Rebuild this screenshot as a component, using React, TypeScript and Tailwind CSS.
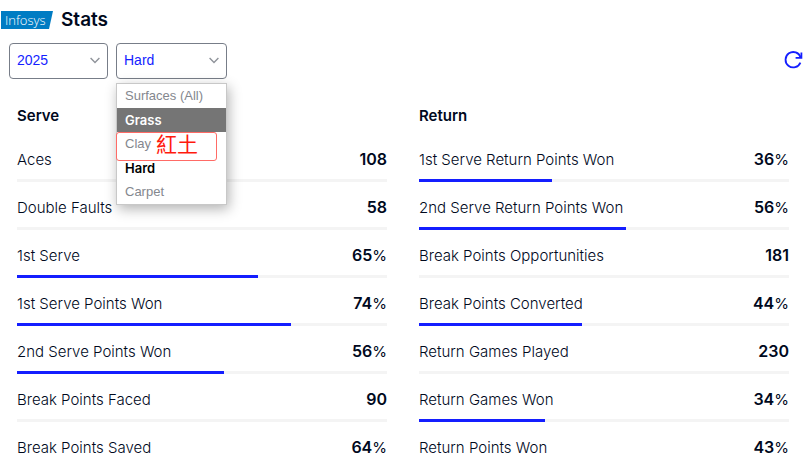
import React from "react";

type Stat = { label: string; value: number; percent?: boolean };

const serve: Stat[] = [
  { label: "Aces", value: 108 },
  { label: "Double Faults", value: 58 },
  { label: "1st Serve", value: 65, percent: true },
  { label: "1st Serve Points Won", value: 74, percent: true },
  { label: "2nd Serve Points Won", value: 56, percent: true },
  { label: "Break Points Faced", value: 90 },
  { label: "Break Points Saved", value: 64, percent: true },
];

const returns: Stat[] = [
  { label: "1st Serve Return Points Won", value: 36, percent: true },
  { label: "2nd Serve Return Points Won", value: 56, percent: true },
  { label: "Break Points Opportunities", value: 181 },
  { label: "Break Points Converted", value: 44, percent: true },
  { label: "Return Games Played", value: 230 },
  { label: "Return Games Won", value: 34, percent: true },
  { label: "Return Points Won", value: 43, percent: true },
];

const surfaces = ["Surfaces (All)", "Grass", "Clay", "Hard", "Carpet"];

function InfosysLogo() {
  return (
    <svg width="53" height="24" viewBox="0 0 53 24" role="img" aria-label="Infosys">
      <path d="M1 3H53L49 21H1Z" fill="#007cc3" />
      <text x="5" y="17" fontSize="13" fill="#ffffff" className="font-['Open_Sans',sans-serif] font-light">
        Infosys
      </text>
    </svg>
  );
}

function Chevron() {
  return (
    <svg
      className="pointer-events-none absolute top-3 right-2"
      width="10"
      height="10"
      viewBox="0 0 10 10"
      fill="none"
      stroke="#8f939a"
      strokeWidth="1.4"
      aria-hidden="true"
    >
      <path d="M0.6 3L5 7.4L9.4 3" />
    </svg>
  );
}

const selectClass =
  "h-9 w-full appearance-none rounded border border-[#777d88] bg-white pb-0.5 pl-[7px] font-['Liberation_Sans',Arial,sans-serif] text-sm text-[#141eff] outline-none";

function SurfaceList() {
  return (
    <ul
      role="listbox"
      aria-label="Surface options"
      className="absolute top-10 left-0 z-10 w-full border border-[#c8c8c8] bg-white font-['Liberation_Sans',Arial,sans-serif] text-[13px] leading-6 text-[#84878e] shadow-[2px_4px_12px_rgba(0,0,0,0.3)]"
    >
      {surfaces.map((name) => (
        <li
          key={name}
          role="option"
          aria-selected={name === "Hard"}
          className={
            name === "Grass"
              ? "bg-[#757575] px-2 font-['Inter',sans-serif] font-semibold text-white"
              : name === "Hard"
                ? "px-2 font-['Inter',sans-serif] font-semibold text-black"
                : "relative px-2"
          }
        >
          {name}
          {name === "Clay" && (
            <span className="absolute top-0 -left-px h-[29px] w-[101px] rounded-[3px] border border-[#ff6b66] pl-[39px] font-['Noto_Sans_CJK_TC',sans-serif] text-[21px] leading-5 font-normal text-[#ff1a0d]">
              紅土
            </span>
          )}
        </li>
      ))}
    </ul>
  );
}

function StatColumn({ title, stats }: { title: string; stats: Stat[] }) {
  return (
    <section>
      <h2 className="mb-[6px] text-[15px] leading-6 font-semibold">{title}</h2>
      <dl>
        {stats.map((s) => (
          <div key={s.label} className="pt-[13px]">
            <div className="flex h-8 items-baseline justify-between text-base leading-6">
              <dt className="text-[15px] font-light">{s.label}</dt>
              <dd className="font-semibold">
                {s.value}
                {s.percent && <span className="text-[15px] font-normal">%</span>}
              </dd>
            </div>
            <div className="h-[3px] bg-[#f4f4f4]">
              {s.percent && <div className="h-full bg-[#141eff]" style={{ width: `${s.value}%` }} />}
            </div>
          </div>
        ))}
      </dl>
    </section>
  );
}

export default function App() {
  return (
    <main className="h-screen overflow-hidden bg-white font-['Inter',sans-serif] text-[#00091d]">
      <header className="flex h-[43px] items-center gap-2 pb-[3px]">
        <InfosysLogo />
        <h1 className="text-[19px] font-semibold">Stats</h1>
      </header>
      <div className="flex items-center gap-2 pr-[2px] pl-[9px]">
        <div className="relative w-[99px]">
          <select aria-label="Year" className={selectClass} defaultValue="2025">
            <option>2025</option>
            <option>2024</option>
          </select>
          <Chevron />
        </div>
        <div className="relative w-[111px]">
          <select aria-label="Surface" className={selectClass} defaultValue="Hard">
            {surfaces.map((name) => (
              <option key={name}>{name}</option>
            ))}
          </select>
          <Chevron />
          <SurfaceList />
        </div>
        <button type="button" aria-label="Reset filters" className="ml-auto pb-0.5 text-[#141eff]">
          <svg width="20" height="20" viewBox="0 0 20 20" fill="none" stroke="currentColor" strokeWidth="1.8" aria-hidden="true">
            <path d="M17.6 7.4A7.7 7.7 0 1 0 17.4 12.6" />
            <path d="M18.4 2.4V7.8H12.6" />
          </svg>
        </button>
      </div>
      <div className="grid grid-cols-2 gap-8 pt-[25px] pr-4 pl-[17px]">
        <StatColumn title="Serve" stats={serve} />
        <StatColumn title="Return" stats={returns} />
      </div>
    </main>
  );
}
